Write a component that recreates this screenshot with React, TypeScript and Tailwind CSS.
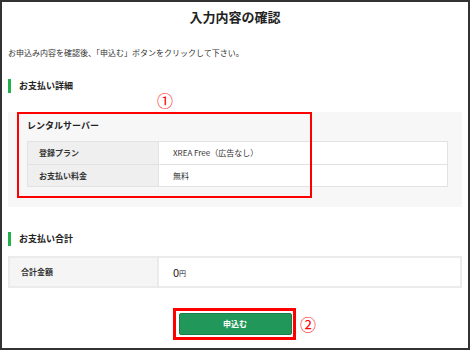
const font = { fontFamily: '"Noto Sans CJK JP", "Noto Sans", sans-serif' };

function SectionHeading({ label, className }: { label: string; className?: string }) {
  return (
    <div className={`flex h-[14px] items-center ${className ?? ""}`}>
      <span className="h-[14px] w-[3px] bg-[#22b24c]" />
      <span className="ml-[8px] text-[9px] font-bold leading-[14px] text-[#222]">{label}</span>
    </div>
  );
}

const planRows = [
  { label: "登録プラン", value: "XREA Free（広告なし）" },
  { label: "お支払い料金", value: "無料" },
];

export default function App() {
  return (
    <div
      className="relative flex h-[350px] w-[470px] flex-col border-2 border-[#333] bg-white px-[6px] text-[#333]"
      style={font}
    >
      <h1 className="pt-[7px] text-center text-[13px] font-bold leading-[16px] text-[#222]">
        入力内容の確認
      </h1>

      <p className="mt-[23px] text-[8px] leading-[10px] text-[#333]">
        お申込み内容を確認後、「申込む」ボタンをクリックして下さい。
      </p>

      <SectionHeading label="お支払い詳細" className="mt-[21px]" />

      <div className="mt-[19px] h-[95px] bg-[#f7f7f7] pl-[19px] pr-[14px] pt-[8px]">
        <div className="text-[9px] font-bold leading-[12px] text-[#222]">レンタルサーバー</div>
        <div className="mt-[9px] border border-[#e2e2e2]">
          {planRows.map((row, i) => (
            <div key={row.label} className={`flex h-[22px] ${i > 0 ? "border-t border-[#e2e2e2]" : ""}`}>
              <div className="flex w-[131px] items-center border-r border-[#e2e2e2] bg-[#efefef] pl-[11px] text-[8px] font-bold text-[#333]">
                {row.label}
              </div>
              <div className="flex flex-1 items-center bg-white pl-[14px] text-[8px] text-[#333]">
                {row.value}
              </div>
            </div>
          ))}
        </div>
      </div>

      <SectionHeading label="お支払い合計" className="mt-[25px]" />

      <div className="mt-[10px] flex h-[32px] border-2 border-[#ebebeb]">
        <div className="flex w-[149px] items-center border-r-2 border-[#ebebeb] bg-[#f5f5f5] pl-[11px] text-[8px] font-bold text-[#333]">
          合計金額
        </div>
        <div className="flex flex-1 items-center bg-white pl-[14px] text-[#222]">
          <span className="text-[11px] leading-none">0</span>
          <span className="mt-[2px] text-[7px] leading-none">円</span>
        </div>
      </div>

      <div className="mt-[25px] flex justify-center">
        <button
          type="button"
          className="h-[22px] w-[113px] rounded-[2px] border border-[#1a7f4a] bg-[#21985a] text-[8px] font-bold text-white"
        >
          申込む
        </button>
      </div>

      {/* annotations */}
      <div className="pointer-events-none absolute left-[15px] top-[110px] h-[86px] w-[295px] border-2 border-[#ff0000]" />
      <span className="absolute left-[155px] top-[88px] text-[16px] leading-[20px] text-[#ff0000]">①</span>
      <div className="pointer-events-none absolute left-[171px] top-[306px] h-[32px] w-[123px] border-[3px] border-[#ff0000]" />
      <span className="absolute left-[298px] top-[312px] text-[16px] leading-[20px] text-[#ff0000]">②</span>
    </div>
  );
}
